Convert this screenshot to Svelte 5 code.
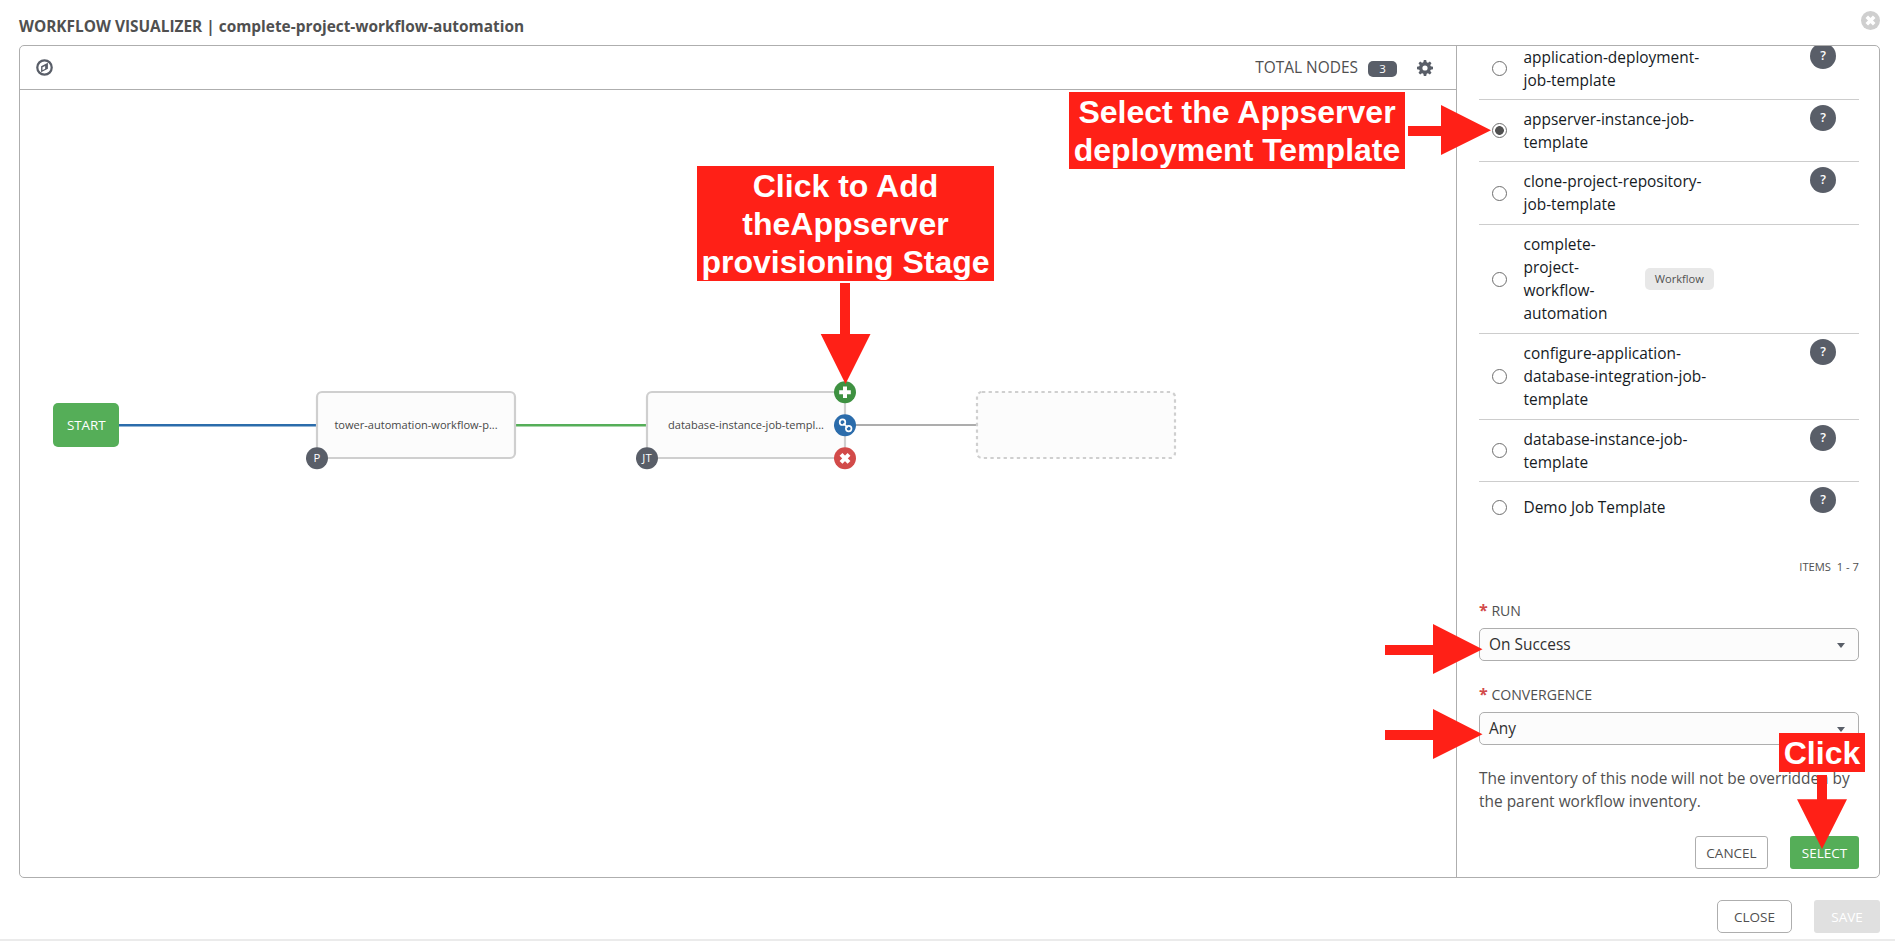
<script>
  const templates = [
    { lines: ['application-deployment-', 'job-template'], height: 62, help: true },
    { lines: ['appserver-instance-job-', 'template'], height: 62, help: true, checked: true },
    { lines: ['clone-project-repository-', 'job-template'], height: 63, help: true },
    { lines: ['complete-', 'project-', 'workflow-', 'automation'], height: 109, workflow: true },
    { lines: ['configure-application-', 'database-integration-job-', 'template'], height: 86, help: true },
    { lines: ['database-instance-job-', 'template'], height: 62, help: true },
    { lines: ['Demo Job Template'], height: 50, help: true, last: true }
  ];
  const fields = [
    { label: 'RUN', value: 'On Success' },
    { label: 'CONVERGENCE', value: 'Any' }
  ];
</script>

<div class="page">
  <header class="title">
    <h1>WORKFLOW VISUALIZER | complete-project-workflow-automation</h1>
    <svg class="dismiss" width="19" height="19" viewBox="0 0 19 19">
      <circle cx="9.5" cy="9.5" r="9.5" fill="#cfcfcf" />
      <path d="M5.800 5.800l7.400 7.400M13.200 5.800l-7.400 7.400" stroke="#fff" stroke-width="3.6" />
    </svg>
  </header>

  <main class="frame">
    <section class="graph">
      <div class="toolbar">
        <svg width="17" height="17" viewBox="0 0 16 16">
          <circle cx="8" cy="8" r="6.8" fill="none" stroke="#595e68" stroke-width="2.1" />
          <path fill="#595e68" fill-rule="evenodd" d="M11.2 3.6v5.600L4.800 12.400V6.800zM6.100 7.700v2.800L8.600 9.200V6.500z" />
        </svg>
        <div class="totals">
          <span class="label">TOTAL NODES</span>
          <span class="count">3</span>
          <svg width="16" height="16" viewBox="0 0 16 16">
            <g fill="#595e68">
              {#each [0, 45, 90, 135] as a}
                <path d="M6.300 2.500L6.800 0h2.400l.5 2.500v11L9.200 16H6.800l-.5-2.500z" transform="rotate({a} 8 8)" />
              {/each}
              <circle cx="8" cy="8" r="6" />
            </g>
            <circle cx="8" cy="8" r="2.6" fill="#fff" />
          </svg>
        </div>
      </div>
      <svg class="canvas" width="1436" height="787" viewBox="20 90 1436 787">
        <path d="M118 425.3H317" stroke="#2b6cab" stroke-width="2.4" />
        <path d="M515 425.3H647" stroke="#55ae58" stroke-width="2.4" />
        <path d="M845 425H977" stroke="#adadad" stroke-width="2.2" />
        <rect x="53" y="403" width="66" height="44" rx="5" fill="#55ae58" />
        <text x="86.300" y="430" fill="#fff" font-size="13.4" font-weight="500">START</text>
        <g fill="#fcfcfc" stroke="#cfcfcf" stroke-width="2.200">
          <rect x="317" y="392" width="198" height="66" rx="5" />
          <rect x="647" y="392" width="198" height="66" rx="5" />
          <rect x="977" y="392" width="198" height="66" rx="5" stroke-dasharray="3.3 3.3" />
        </g>
        <g fill="#484848" font-size="11.05">
          <text x="416" y="429">tower-automation-workflow-p...</text>
          <text x="746" y="429">database-instance-job-templ...</text>
        </g>
        <g fill="#595e68">
          <circle cx="317" cy="458.3" r="11" />
          <circle cx="647" cy="458.3" r="11" />
        </g>
        <g fill="#fff" font-size="11.3">
          <text x="317" y="462">P</text>
          <text x="647" y="462">JT</text>
        </g>
        <circle cx="845" cy="392.3" r="11" fill="#3e9141" />
        <path d="M845 386.5v11.600M839.200 392.300h11.600" stroke="#fff" stroke-width="4" />
        <circle cx="845" cy="425.2" r="11" fill="#2b6cab" />
        <g fill="none" stroke="#fff" stroke-width="1.700">
          <circle cx="842.500" cy="422.200" r="2.800" />
          <circle cx="848.700" cy="428.600" r="2.800" />
          <path d="M843.500 423.400l4.200 4.200" stroke-width="1.500" />
        </g>
        <circle cx="845" cy="458.3" r="11" fill="#d24a49" />
        <path d="M841 454.300l8 8M849 454.300l-8 8" stroke="#fff" stroke-width="4" />
      </svg>
    </section>

    <aside class="panel">
      <div class="list">
        {#each templates as t}
          <div class="row" class:last={t.last} style="height: {t.height}px">
            <span class="radio" class:checked={t.checked}></span>
            <span class="name">
              {#each t.lines as line}<span>{line}</span>{/each}
            </span>
            {#if t.workflow}<span class="chip">Workflow</span>{/if}
            {#if t.help}<span class="help">?</span>{/if}
          </div>
        {/each}
      </div>
      <div class="items">ITEMS&nbsp; 1 - 7</div>
      {#each fields as f}
        <div class="field">
          <div class="caption"><b>*</b> {f.label}</div>
          <div class="select">
            <span>{f.value}</span>
            <svg width="8" height="5" viewBox="0 0 8 5"><path d="M0 0h8L4 5z" fill="#595e68" /></svg>
          </div>
        </div>
      {/each}
      <p>The inventory of this node will not be overridden by<br />the parent workflow inventory.</p>
      <div class="actions">
        <button class="cancel">CANCEL</button>
        <button class="choose">SELECT</button>
      </div>
    </aside>
  </main>

  <footer>
    <button class="close">CLOSE</button>
    <button class="save">SAVE</button>
  </footer>

  <div class="note add">Click to Add<br />theAppserver<br />provisioning Stage</div>
  <div class="note pick">Select the Appserver<br />deployment Template</div>
  <div class="note click">Click</div>
  <svg class="arrows" width="1895" height="941" viewBox="0 0 1895 941">
    <g fill="#ff2017">
      <path d="M840 283h10v51h20.500L845.500 384L820.700 334H840z" />
      <path d="M1408 126h33v-21l50 25.200l-50 24.800v-19h-33z" />
      <path d="M1385 645h48v-21l49.500 25.200l-49.500 24.800v-19h-48z" />
      <path d="M1385 730h48v-21l49.500 25.200l-49.500 24.800v-19h-48z" />
      <path d="M1817 775h10v24.300h20L1822 849L1797 799.300h20z" />
    </g>
  </svg>
</div>

<style>
  :global(body) {
    background: #fff;
  }
  .page {
    position: relative;
    box-sizing: border-box;
    width: 1895px;
    height: 941px;
    padding: 0 15px 0 19px;
    overflow: hidden;
    display: flex;
    flex-direction: column;
    font-family: 'Open Sans', sans-serif;
    font-size: 15.45px;
    color: #505050;
    border-bottom: 2px solid #ebebeb;
  }
  .title {
    height: 45px;
    display: flex;
    justify-content: space-between;
  }
  h1 {
    margin: 15px 0 0;
    font-size: 15.42px;
    line-height: 23px;
    font-weight: 700;
  }
  .dismiss {
    margin-top: 11px;
  }
  .frame {
    box-sizing: border-box;
    height: 833px;
    display: flex;
    border: 1px solid #aeaeae;
    border-radius: 5px;
    overflow: hidden;
  }
  .graph {
    width: 1436px;
    border-right: 1px solid #aeaeae;
  }
  .toolbar {
    box-sizing: border-box;
    height: 44px;
    border-bottom: 1px solid #aeaeae;
    padding: 0 23px 0 16px;
    display: flex;
    align-items: center;
    justify-content: space-between;
  }
  .totals {
    display: flex;
    align-items: center;
  }
  .label {
    margin-top: -1px;
  }
  .count {
    width: 29px;
    height: 16px;
    margin: 2px 20px 0 10px;
    border-radius: 5px;
    background: #595e68;
    color: #fff;
    font-size: 11.5px;
    line-height: 16px;
    text-align: center;
  }
  .canvas {
    display: block;
    text-anchor: middle;
  }
  .panel {
    box-sizing: border-box;
    flex: 1;
    padding: 0 20px 0 22px;
    display: flex;
    flex-direction: column;
  }
  .list,
  .items,
  .field,
  .actions {
    box-sizing: border-box;
    width: 380px;
  }
  .list {
    margin-top: -8px;
  }
  .row {
    box-sizing: border-box;
    display: flex;
    align-items: center;
    padding-left: 13px;
    border-bottom: 1px solid #cdcdcd;
    color: #161b1f;
  }
  .row.last {
    border-bottom: 0;
  }
  .radio {
    box-sizing: border-box;
    width: 15px;
    height: 15px;
    border: 1px solid #6e6e6e;
    border-radius: 50%;
    margin-right: 16.5px;
    flex: none;
  }
  .radio.checked {
    background: radial-gradient(circle, #505050 4px, #fff 4.7px);
  }
  .name span {
    display: block;
    line-height: 23px;
    white-space: nowrap;
  }
  .chip {
    margin-left: 37.5px;
    width: 69px;
    height: 22px;
    border-radius: 5px;
    background: #e8e8e8;
    color: #505050;
    font-size: 11.1px;
    line-height: 21px;
    text-align: center;
  }
  .help {
    align-self: flex-start;
    margin: 4.6px 23px 0 auto;
    width: 26px;
    height: 26px;
    border-radius: 50%;
    background: #595e68;
    color: #fff;
    font-size: 12.5px;
    font-weight: 600;
    line-height: 25px;
    text-align: center;
  }
  .items {
    margin-top: 26px;
    height: 16px;
    margin-bottom: 27px;
    font-size: 11.2px;
    line-height: 18px;
    text-align: right;
  }
  .field {
    height: 84px;
  }
  .caption {
    font-size: 14.1px;
    line-height: 19px;
    height: 27px;
    box-sizing: border-box;
  }
  .caption b {
    color: #d24a49;
    font-size: 16px;
  }
  .select {
    box-sizing: border-box;
    height: 33px;
    border: 1px solid #aeaeae;
    border-radius: 5px;
    background: #fcfcfc;
    padding: 0 13px 2px 9px;
    display: flex;
    align-items: center;
    justify-content: space-between;
    color: #303030;
  }
  .select svg {
    margin-top: 3px;
  }
  p {
    margin: -2px 0 0;
    line-height: 23px;
    white-space: nowrap;
  }
  .actions {
    display: flex;
    justify-content: flex-end;
    gap: 22px;
    margin-top: 23px;
  }
  button {
    box-sizing: border-box;
    height: 33px;
    padding: 0;
    font: 13.5px/30px 'Open Sans', sans-serif;
    color: #505050;
    background: #fff;
    border: 1px solid #aeaeae;
    border-radius: 5px;
  }
  .cancel {
    width: 73px;
    border-radius: 3px;
  }
  .choose {
    width: 69px;
    border: 0;
    border-radius: 3px;
    background: #55ae58;
    color: #fff;
  }
  footer {
    display: flex;
    justify-content: flex-end;
    gap: 22px;
    padding-top: 22px;
  }
  .close {
    width: 75px;
  }
  .save {
    width: 66px;
    border: 0;
    border-radius: 3px;
    background: #e0e0e0;
    color: #fff;
  }
  .note {
    position: absolute;
    box-sizing: border-box;
    padding-top: 1px;
    background: #ff2017;
    color: #fff;
    font: 700 32px/38px 'Liberation Sans', Arial, sans-serif;
    text-align: center;
    white-space: nowrap;
  }
  .add {
    left: 697px;
    top: 166px;
    width: 297px;
    height: 115px;
  }
  .pick {
    left: 1069px;
    top: 92px;
    width: 336px;
    height: 77px;
  }
  .click {
    left: 1779px;
    top: 733px;
    width: 86px;
    height: 39px;
  }
  .arrows {
    position: absolute;
    left: 0;
    top: 0;
  }
</style>
